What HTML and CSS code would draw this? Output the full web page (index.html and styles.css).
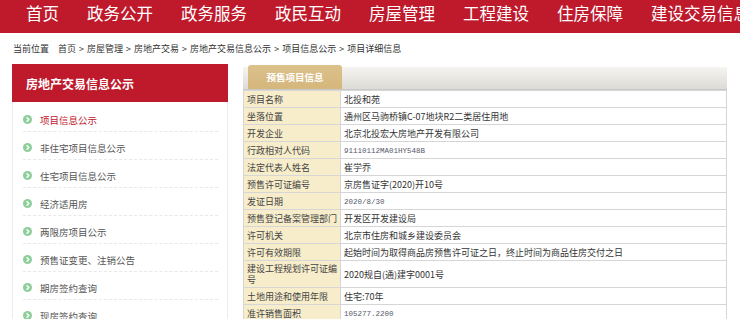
FILE: index.html
```html
<!DOCTYPE html>
<html lang="zh-CN">
<head>
  <meta charset="UTF-8">
  <title>项目详细信息</title>
  <link rel="stylesheet" href="styles.css">
</head>
<body>
  <!-- top navigation -->
  <div class="nav">
    <a class="nav-item">首页</a>
    <a class="nav-item">政务公开</a>
    <a class="nav-item">政务服务</a>
    <a class="nav-item">政民互动</a>
    <a class="nav-item">房屋管理</a>
    <a class="nav-item">工程建设</a>
    <a class="nav-item">住房保障</a>
    <a class="nav-item">建设交易信息</a>
  </div>

  <div class="crumbs">
    <span class="crumbs-label">当前位置</span>
    首页 &gt; 房屋管理 &gt; 房地产交易 &gt; 房地产交易信息公示 &gt; 项目信息公示 &gt; 项目详细信息
  </div>

  <div class="main">
    <!-- left menu -->
    <div class="side">
      <div class="side-title">房地产交易信息公示</div>
      <ul class="side-list">
        <li class="active"><span class="dot"><svg viewBox="0 0 10 10"><path d="M4 2.6 L6.4 5 L4 7.4" /></svg></span>项目信息公示</li>
        <li><span class="dot"><svg viewBox="0 0 10 10"><path d="M4 2.6 L6.4 5 L4 7.4" /></svg></span>非住宅项目信息公示</li>
        <li><span class="dot"><svg viewBox="0 0 10 10"><path d="M4 2.6 L6.4 5 L4 7.4" /></svg></span>住宅项目信息公示</li>
        <li><span class="dot"><svg viewBox="0 0 10 10"><path d="M4 2.6 L6.4 5 L4 7.4" /></svg></span>经济适用房</li>
        <li><span class="dot"><svg viewBox="0 0 10 10"><path d="M4 2.6 L6.4 5 L4 7.4" /></svg></span>两限房项目公示</li>
        <li><span class="dot"><svg viewBox="0 0 10 10"><path d="M4 2.6 L6.4 5 L4 7.4" /></svg></span>预售证变更、注销公告</li>
        <li><span class="dot"><svg viewBox="0 0 10 10"><path d="M4 2.6 L6.4 5 L4 7.4" /></svg></span>期房签约查询</li>
        <li><span class="dot"><svg viewBox="0 0 10 10"><path d="M4 2.6 L6.4 5 L4 7.4" /></svg></span>现房签约查询</li>
      </ul>
    </div>

    <!-- detail table -->
    <div class="panel">
      <div class="tabbar">
        <div class="tab">预售项目信息</div>
      </div>
      <table class="info">
        <tr><td class="label">项目名称</td><td>北投和苑</td></tr>
        <tr><td class="label">坐落位置</td><td>通州区马驹桥镇C-07地块R2二类居住用地</td></tr>
        <tr><td class="label">开发企业</td><td>北京北投宏大房地产开发有限公司</td></tr>
        <tr><td class="label">行政相对人代码</td><td><span class="code">91110112MA01HY548B</span></td></tr>
        <tr><td class="label">法定代表人姓名</td><td>崔学乔</td></tr>
        <tr><td class="label">预售许可证编号</td><td>京房售证字(2020)开10号</td></tr>
        <tr><td class="label">发证日期</td><td><span class="code">2020/8/30</span></td></tr>
        <tr><td class="label">预售登记备案管理部门</td><td>开发区开发建设局</td></tr>
        <tr><td class="label">许可机关</td><td>北京市住房和城乡建设委员会</td></tr>
        <tr><td class="label">许可有效期限</td><td>起始时间为取得商品房预售许可证之日，终止时间为商品住房交付之日</td></tr>
        <tr class="tall"><td class="label">建设工程规划许可证编号</td><td>2020规自(通)建字0001号</td></tr>
        <tr><td class="label">土地用途和使用年限</td><td>住宅:70年</td></tr>
        <tr><td class="label">准许销售面积</td><td><span class="code">105277.2200</span></td></tr>
      </table>
    </div>
  </div>
</body>
</html>
```

FILE: styles.css
```css
body {
  margin: 0;
  font-family: "Noto Sans CJK SC", "Liberation Sans", sans-serif;
  background: #fff;
  color: #333;
  overflow: hidden;
}

.nav {
  height: 33px;
  background: #be1a2c;
  padding-left: 12px;
  display: flex;
  white-space: nowrap;
  overflow: hidden;
}

.nav-item {
  padding: 0 14px;
  line-height: 27px;
  font-size: 16.5px;
  color: #fff;
  flex-shrink: 0;
}

.crumbs {
  height: 31px;
  line-height: 32px;
  padding-left: 13px;
  font-size: 9px;
  color: #333;
  word-spacing: 1px;
}

.crumbs-label {
  margin-right: 6px;
}

.main {
  display: flex;
  gap: 15px;
  margin-left: 12px;
  width: 715px;
}

/* left menu */
.side {
  width: 214px;
  border: 1px solid #ececec;
  border-top: none;
  min-height: 300px;
}

.side-title {
  height: 38px;
  line-height: 40px;
  background: #be1a2c;
  color: #fff;
  font-size: 12px;
  font-weight: bold;
  padding-left: 14px;
  margin: 0 -1px;
}

.side-list {
  list-style: none;
  margin: 0;
  padding: 2px 9px 0 10px;
}

.side-list li {
  display: flex;
  align-items: center;
  height: 23px;
  padding-top: 4px;
  border-bottom: 1px dashed #e8e8e8;
  font-size: 9.5px;
  color: #555;
}

.side-list li.active {
  color: #c0162a;
}

.dot {
  width: 9px;
  height: 9px;
  border-radius: 50%;
  background: #8dcf99;
  margin-right: 8px;
  display: flex;
}

.dot svg {
  width: 9px;
  height: 9px;
  fill: none;
  stroke: #fff;
  stroke-width: 1.6;
}

/* right panel */
.panel {
  width: 484px;
  padding-top: 1px;
}

.tabbar {
  height: 22px;
  margin-top: 2px;
  background: linear-gradient(#f5f4f1, #dddbd5);
  border-bottom: 1px solid #c9c9c9;
  display: flex;
  align-items: flex-end;
  padding-left: 5px;
}

.tab {
  width: 94px;
  height: 24px;
  line-height: 24px;
  background: linear-gradient(#dcc18c, #d5b77c);
  border-radius: 3px 3px 0 0;
  color: #fff;
  font-size: 9.5px;
  font-weight: bold;
  text-align: center;
}

.info {
  width: 100%;
  border-collapse: collapse;
  border: 1px solid #c9c9c9;
  font-size: 9px;
  color: #333;
}

.info td {
  height: 16px;
  padding: 0 3px;
  border: 1px solid #d6d6d6;
  line-height: 11px;
}

.info td.label {
  width: 91px;
  padding-right: 2px;
  background: #f7edcb;
  color: #444;
}

.info tr.tall td {
  height: 26px;
}

.code {
  font-family: "Liberation Mono", monospace;
  font-size: 7.5px;
  color: #55576a;
}
```
